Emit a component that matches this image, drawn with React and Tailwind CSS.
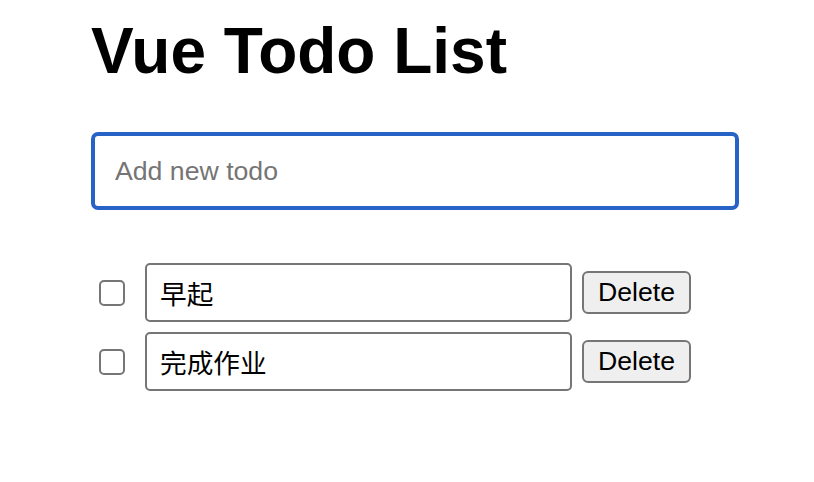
import React, { useState } from 'react';

const FONT = "font-['Liberation_Sans','Noto_Sans_CJK_SC',sans-serif]";

const TodoItem = ({ todo, onToggle, onChange, onDelete }) => (
  <li className="flex items-center h-[59px]">
    <input
      type="checkbox"
      checked={todo.done}
      onChange={onToggle}
      className="appearance-none ml-[8px] w-[26px] h-[26px] border-2 border-[#767676] rounded-[5px] bg-white shrink-0"
    />
    <input
      type="text"
      value={todo.text}
      onChange={e => onChange(e.target.value)}
      className={`${FONT} ml-[20px] w-[427px] h-[59px] px-[13px] border-2 border-[#767676] rounded-[5px] text-[26.67px] text-black outline-none bg-white`}
    />
    <button
      type="button"
      onClick={onDelete}
      className={`${FONT} ml-[10px] w-[109px] h-[43px] border-2 border-[#767676] rounded-[6px] bg-[#efefef] text-[26.67px] text-black leading-none`}
    >
      Delete
    </button>
  </li>
);

const App = () => {
  const [newTodo, setNewTodo] = useState('');
  const [todos, setTodos] = useState([
    { id: 1, text: '早起', done: false },
    { id: 2, text: '完成作业', done: false }
  ]);

  const addTodo = e => {
    if (e.key === 'Enter' && newTodo.trim()) {
      setTodos([...todos, { id: Date.now(), text: newTodo.trim(), done: false }]);
      setNewTodo('');
    }
  };

  return (
    <div className={`${FONT} min-h-[482px] w-[814px] bg-white pl-[91px] pt-[19px] flex flex-col`}>
      <h1 className="text-[64px] leading-[64px] font-bold text-black">Vue Todo List</h1>

      {/* New todo input (focused) */}
      <input
        type="text"
        value={newTodo}
        onChange={e => setNewTodo(e.target.value)}
        onKeyDown={addTodo}
        placeholder="Add new todo"
        className={`${FONT} mt-[49px] w-[648px] h-[78px] px-[20px] border-4 border-[#2762c7] rounded-[7px] text-[26.67px] text-black placeholder:text-[#757575] outline-none`}
      />

      <ul className="mt-[53px] flex flex-col gap-[10px]">
        {todos.map(todo => (
          <TodoItem
            key={todo.id}
            todo={todo}
            onToggle={() => setTodos(todos.map(t => (t.id === todo.id ? { ...t, done: !t.done } : t)))}
            onChange={text => setTodos(todos.map(t => (t.id === todo.id ? { ...t, text } : t)))}
            onDelete={() => setTodos(todos.filter(t => t.id !== todo.id))}
          />
        ))}
      </ul>
    </div>
  );
};

export default App;
